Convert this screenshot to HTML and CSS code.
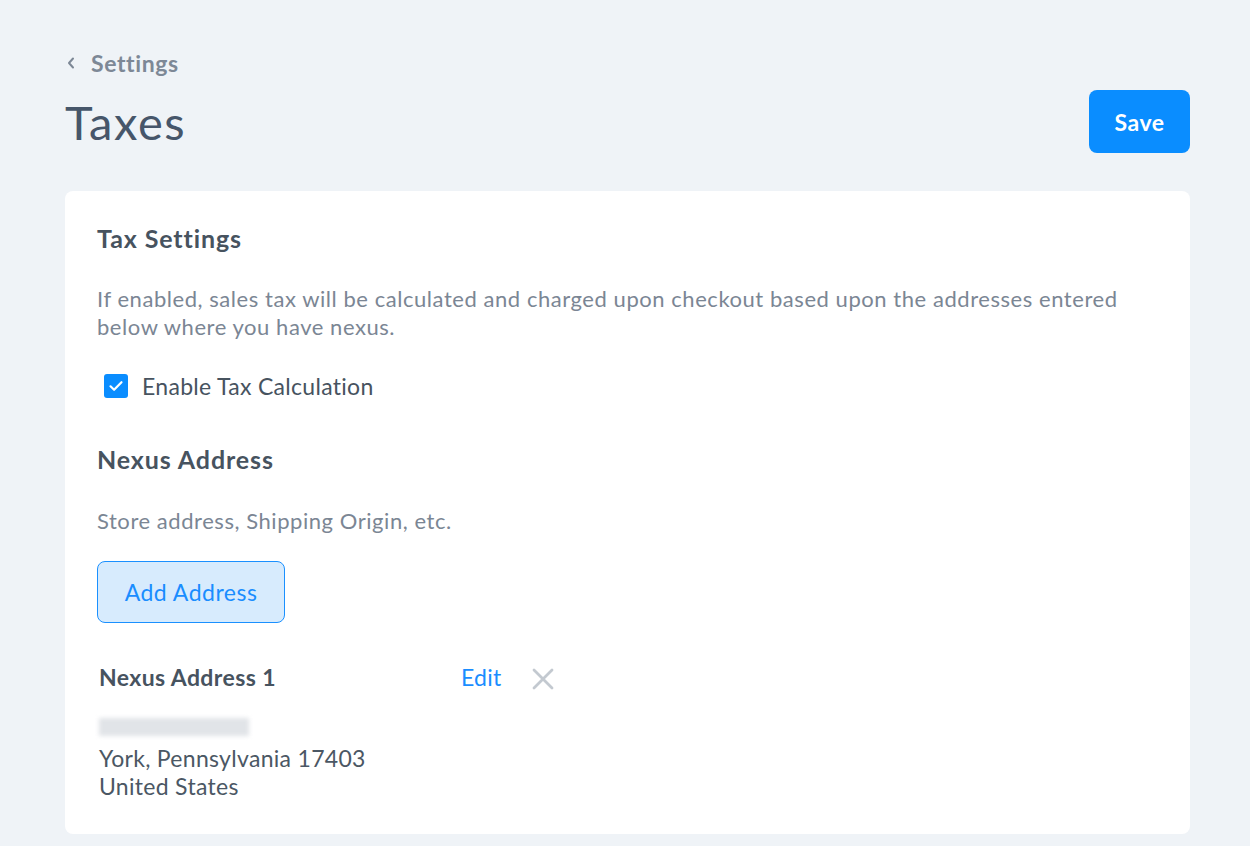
FILE: index.html
```html
<!DOCTYPE html>
<html lang="en">
<head>
    <meta charset="UTF-8">
    <title>Taxes</title>
    <link rel="stylesheet" href="styles.css">
</head>
<body>
    <div class="page">
        <a class="back" href="#">
            <svg class="chev" width="8" height="12" viewBox="0 0 8 12"><path d="M6 1.5L2 6l4 4.5" fill="none" stroke="#7d8896" stroke-width="2" stroke-linecap="round" stroke-linejoin="round"/></svg>
            Settings
        </a>
        <div class="header">
            <h1>Taxes</h1>
            <button class="save">Save</button>
        </div>
        <div class="card">
            <h2>Tax Settings</h2>
            <p class="desc">If enabled, sales tax will be calculated and charged upon checkout based upon the addresses entered below where you have nexus.</p>
            <label class="check">
                <span class="box">
                    <svg width="24" height="24" viewBox="0 0 24 24"><path d="M6.5 12.3l3.6 3.5 7.4-7.6" fill="none" stroke="#fff" stroke-width="2.2" stroke-linecap="round" stroke-linejoin="round"/></svg>
                </span>
                Enable Tax Calculation
            </label>
            <h2 class="nexus">Nexus Address</h2>
            <p class="desc store">Store address, Shipping Origin, etc.</p>
            <button class="add">Add Address</button>
            <div class="addr-row">
                <span class="addr-title">Nexus Address 1</span>
                <a class="edit" href="#">Edit</a>
                <svg class="remove" width="22" height="22" viewBox="0 0 22 22"><path d="M2 2l18 18M20 2L2 20" stroke="#c3c9d0" stroke-width="2.8" stroke-linecap="round"/></svg>
            </div>
            <div class="address">
                <div class="blurred"></div>
                <div>York, Pennsylvania 17403</div>
                <div>United States</div>
            </div>
        </div>
    </div>
</body>
</html>
```

FILE: styles.css
```css
body{
    margin: 0;
    background-color: #eff3f7;
    font-family: "Lato", "Open Sans", sans-serif;
    color: #47535f;
}
.page{
    padding: 50px 60px 0 65px;
}
.back{
    display: flex;
    align-items: center;
    color: #7d8896;
    font-size: 23px;
    font-weight: bold;
    letter-spacing: 0.6px;
    text-decoration: none;
    height: 26px;
}
.chev{
    margin-left: 2px;
    margin-right: 16px;
}
.header{
    display: flex;
    justify-content: space-between;
    align-items: center;
    margin-top: 14px;
    margin-bottom: 38px;
}
h1{
    margin: 0;
    font-size: 47px;
    font-weight: normal;
    letter-spacing: 1.6px;
    color: #46566a;
}
.save{
    width: 101px;
    height: 63px;
    background-color: #0a8dff;
    color: white;
    border: none;
    border-radius: 8px;
    font-family: inherit;
    font-size: 23px;
    font-weight: bold;
    letter-spacing: 0.5px;
}
.card{
    background-color: white;
    border-radius: 8px;
    padding: 32px 32px 34px 32px;
}
h2{
    margin: 0;
    font-size: 25px;
    font-weight: bold;
    letter-spacing: 0.9px;
    color: #47535f;
    line-height: 30px;
}
.desc{
    color: #7b8694;
    font-size: 22px;
    letter-spacing: 0.55px;
    line-height: 28px;
    margin: 32px 0 0 0;
}
.check{
    display: flex;
    align-items: center;
    gap: 14px;
    margin-top: 31px;
    height: 28px;
    font-size: 23px;
    letter-spacing: 0.3px;
    color: #47535f;
    padding-left: 7px;
}
.box{
    width: 24px;
    height: 24px;
    border-radius: 3px;
    background-color: #0a8dff;
    display: flex;
}
.nexus{
    margin-top: 44px;
}
.store{
    margin-top: 33px;
}
.add{
    display: block;
    margin-top: 26px;
    width: 188px;
    height: 62px;
    background-color: #d7ebfd;
    border: 1px solid #1a90ff;
    border-radius: 8px;
    color: #1a8dff;
    font-family: inherit;
    font-size: 23px;
    letter-spacing: 0.5px;
}
.addr-row{
    display: flex;
    align-items: center;
    height: 28px;
    margin-top: 40px;
    padding-left: 2px;
}
.addr-title{
    font-size: 23px;
    font-weight: bold;
    letter-spacing: 0.4px;
    width: 362px;
}
.edit{
    color: #1a8dff;
    font-size: 23px;
    letter-spacing: 0.3px;
    text-decoration: none;
    margin-right: 30px;
}
.remove{
    margin-top: 3px;
}
.address{
    margin-top: 27px;
    padding-left: 2px;
    font-size: 23px;
    letter-spacing: 0.3px;
    line-height: 28px;
    color: #4b5764;
}
.blurred{
    width: 150px;
    height: 18px;
    margin: 5px 0 8px 0;
    background-color: #e1e4e8;
    filter: blur(2px);
}
```
